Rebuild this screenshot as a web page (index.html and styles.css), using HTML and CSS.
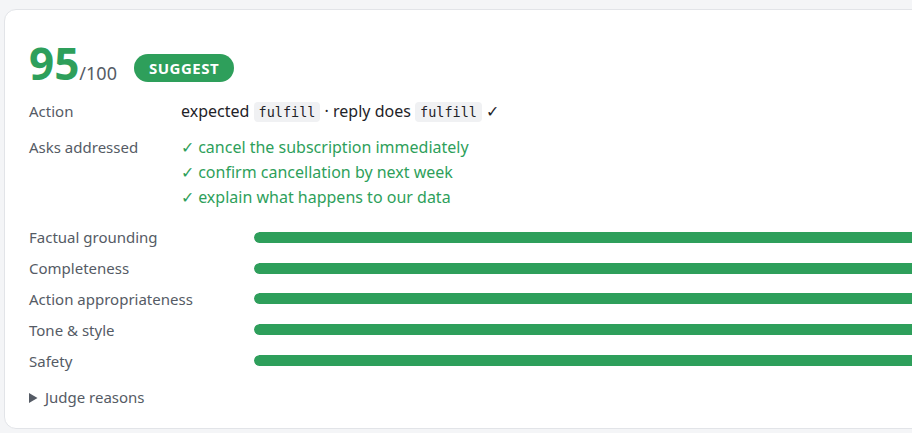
FILE: index.html
```html
<!DOCTYPE html>
<html lang="en">
<head>
    <meta charset="UTF-8">
    <meta name="viewport" content="width=device-width, initial-scale=1.0">
    <title>Judge result</title>
    <link rel="stylesheet" href="styles.css">
</head>
<body>
    <div class="card">
        <div class="score-head">
            <span class="score">95</span><span class="score-max">/100</span>
            <span class="badge">SUGGEST</span>
        </div>

        <div class="info">
            <div class="info-label">Action</div>
            <div class="info-value">expected <code>fulfill</code> · reply does <code>fulfill</code> ✓</div>

            <div class="info-label">Asks addressed</div>
            <div class="info-value asks">
                <div>✓ cancel the subscription immediately</div>
                <div>✓ confirm cancellation by next week</div>
                <div>✓ explain what happens to our data</div>
            </div>
        </div>

        <div class="metrics">
            <div class="metric">
                <span class="metric-label">Factual grounding</span>
                <div class="bar"><div class="bar-fill" style="width: 100%"></div></div>
            </div>
            <div class="metric">
                <span class="metric-label">Completeness</span>
                <div class="bar"><div class="bar-fill" style="width: 100%"></div></div>
            </div>
            <div class="metric">
                <span class="metric-label">Action appropriateness</span>
                <div class="bar"><div class="bar-fill" style="width: 100%"></div></div>
            </div>
            <div class="metric">
                <span class="metric-label">Tone &amp; style</span>
                <div class="bar"><div class="bar-fill" style="width: 100%"></div></div>
            </div>
            <div class="metric">
                <span class="metric-label">Safety</span>
                <div class="bar"><div class="bar-fill" style="width: 100%"></div></div>
            </div>
        </div>

        <details class="reasons">
            <summary>Judge reasons</summary>
        </details>
    </div>
</body>
</html>
```

FILE: styles.css
```css
html, body {
    margin: 0;
    padding: 0;
    overflow: hidden;
}
body {
    background-color: #f4f5f7;
    font-family: "Noto Sans", "Open Sans", Arial, sans-serif;
    color: #1f2328;
    padding: 9px 0 0 4px;
    width: 1200px;
}
.card {
    background-color: #fff;
    border: 1px solid #e2e4e8;
    border-radius: 12px;
    padding: 29px 24px 21px 24px;
    width: 1000px;
}
.score-head {
    display: flex;
    align-items: baseline;
}
.score {
    font-size: 44px;
    font-weight: 700;
    color: #2e9f5b;
    line-height: 48px;
}
.score-max {
    font-size: 18px;
    color: #555b65;
}
.badge {
    background-color: #2e9f5b;
    color: #fff;
    font-weight: 700;
    font-size: 15px;
    letter-spacing: 0.5px;
    border-radius: 14px;
    padding: 4px 15px;
    margin-left: 17px;
    line-height: 20px;
    align-self: center;
    position: relative;
    top: 5px;
}
.info {
    display: grid;
    grid-template-columns: 152px 1fr;
    row-gap: 10px;
    margin-top: 12px;
    font-size: 16px;
    line-height: 25px;
}
.info-label {
    color: #555b65;
    font-size: 15px;
}
.info-value code {
    font-family: "DejaVu Sans Mono", "Liberation Mono", monospace;
    font-size: 13.5px;
    background-color: #f0f1f3;
    border-radius: 4px;
    padding: 2px 5px;
}
.asks {
    color: #2e9f5b;
}
.metrics {
    margin-top: 12px;
}
.metric {
    display: grid;
    grid-template-columns: 225px 1fr;
    align-items: center;
    height: 30.8px;
    font-size: 15px;
    color: #555b65;
}
.bar {
    height: 11px;
    border-radius: 6px;
    background-color: #e8eaed;
    overflow: hidden;
}
.bar-fill {
    height: 100%;
    background-color: #2e9f5b;
    border-radius: 6px;
}
.reasons {
    margin-top: 11px;
    font-size: 15px;
    color: #555b65;
}
.reasons summary {
    cursor: pointer;
}
```
